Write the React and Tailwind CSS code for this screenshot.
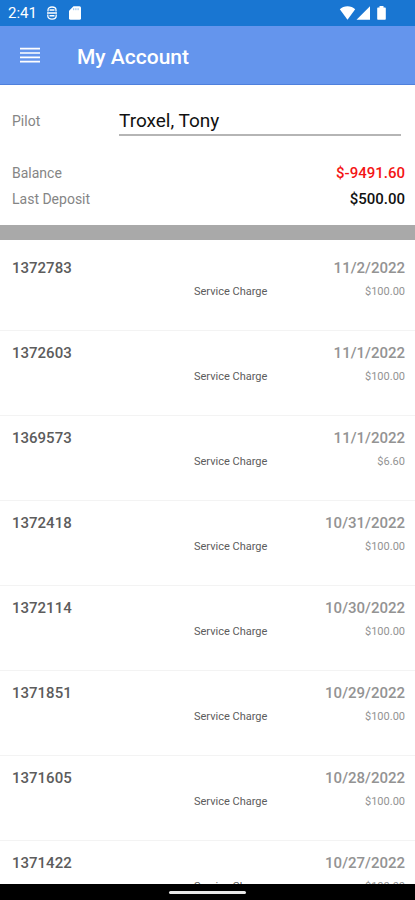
const TRANSACTIONS = [
  { id: "1372783", date: "11/2/2022", type: "Service Charge", amount: "$100.00" },
  { id: "1372603", date: "11/1/2022", type: "Service Charge", amount: "$100.00" },
  { id: "1369573", date: "11/1/2022", type: "Service Charge", amount: "$6.60" },
  { id: "1372418", date: "10/31/2022", type: "Service Charge", amount: "$100.00" },
  { id: "1372114", date: "10/30/2022", type: "Service Charge", amount: "$100.00" },
  { id: "1371851", date: "10/29/2022", type: "Service Charge", amount: "$100.00" },
  { id: "1371605", date: "10/28/2022", type: "Service Charge", amount: "$100.00" },
  { id: "1371422", date: "10/27/2022", type: "Service Charge", amount: "$100.00" },
];

function StatusBar() {
  return (
    <div className="flex h-[26px] shrink-0 items-center justify-between bg-[#1976d2] pl-2 pr-7 text-white">
      <div className="flex items-center">
        <span className="w-9 text-[15px] leading-5">2:41</span>
        <svg className="ml-0.5 h-4 w-3" viewBox="0 0 12 16" fill="none" stroke="currentColor">
          <path d="M2 6.500V5C2 3 3.700 2 6 2s4 1 4 3v1.500M1.800 9.500v1.300C1.800 13 3.500 14.200 6 14.200s4.200-1.200 4.200-3.400V9.500" strokeWidth="1.3" />
          <path d="M1 8h10M3.500 5h5M3.500 10.800h5" strokeWidth="1.4" />
        </svg>
        <svg className="ml-2.5 h-4 w-[14px]" viewBox="0 0 14 16" fill="currentColor">
          <path d="M5.500 1.200h6A1.500 1.500 0 0 1 13 2.700v10.600a1.500 1.500 0 0 1-1.500 1.500h-9A1.500 1.500 0 0 1 1 13.300V5.700z" />
          <path d="M5.700 3.200v2M7.900 3.200v2M10.100 3.200v2" stroke="#8dbcec" strokeWidth="1" />
        </svg>
      </div>
      <svg className="h-4 w-12" viewBox="0 0 48 16" fill="currentColor">
        <path d="M.8 4.300C2.800 2.300 5.500 1.200 8.500 1.200s5.700 1.100 7.700 3.100L8.500 14.800z" />
        <path d="M31 1.200v13.600H17.500z" />
        <path d="M40.500 1h4v1.600h1.300c.6 0 1 .4 1 1v10.200c0 .6-.4 1-1 1h-6.600c-.6 0-1-.4-1-1V3.600c0-.6.4-1 1-1h1.300z" />
      </svg>
    </div>
  );
}

function Transaction({ item }) {
  return (
    <li className="h-[85px] shrink-0 border-b border-[#f3f3f3] pt-3 pr-[10px] pl-3">
      <div className="flex justify-between text-[15px] leading-5 font-medium">
        <span className="text-[#5c5c5c]">{item.id}</span>
        <span className="text-[#939393]">{item.date}</span>
      </div>
      <div className="mt-1.5 grid grid-cols-[182px_1fr_auto] text-[11px] leading-4">
        <span className="col-start-2 text-[#5c5c5c]">{item.type}</span>
        <span className="text-[#939393]">{item.amount}</span>
      </div>
    </li>
  );
}

export default function App() {
  return (
    <div className="flex h-screen flex-col overflow-hidden bg-white font-[Roboto,sans-serif]">
      <StatusBar />

      {/* App bar */}
      <header className="flex h-[59px] shrink-0 items-center border-b border-[#4f80dc] bg-[#6495ed] pl-5 text-white">
        <button type="button" aria-label="Open menu" className="w-[57px]">
          <svg className="h-4 w-5" viewBox="0 0 20 16" stroke="currentColor" strokeWidth="1.7">
            <path d="M0 1.700h20M0 6h20M0 10.300h20M0 14.600h20" />
          </svg>
        </button>
        <h1 className="pt-1 text-[21px] leading-7 font-medium">My Account</h1>
      </header>

      {/* Account summary */}
      <section className="h-[140px] shrink-0 pt-[21px] pr-[10px] pl-3 leading-5">
        <div className="flex items-center pr-1">
          <label htmlFor="pilot" className="w-[107px] text-sm text-[#858585]">Pilot</label>
          <input
            id="pilot"
            type="text"
            defaultValue="Troxel, Tony"
            className="h-[30px] min-w-0 flex-1 border-b-2 border-[#b5b5b5] text-[19px] text-[#111] outline-none"
          />
        </div>
        <dl className="mt-[27px] space-y-1.5">
          <div className="flex justify-between leading-5">
            <dt className="text-sm text-[#858585]">Balance</dt>
            <dd className="text-[15px] leading-5 font-medium text-[#f41414]">$-9491.60</dd>
          </div>
          <div className="flex justify-between leading-5">
            <dt className="text-sm text-[#858585]">Last Deposit</dt>
            <dd className="text-[15px] leading-5 font-medium text-[#111]">$500.00</dd>
          </div>
        </dl>
      </section>
      <div className="h-[15px] shrink-0 bg-[#a9a9a9]" />

      {/* Transactions */}
      <ul className="min-h-0 flex-1 overflow-hidden pt-1.5">
        {TRANSACTIONS.map((t) => (
          <Transaction key={t.id} item={t} />
        ))}
      </ul>

      {/* Gesture bar */}
      <div className="flex h-4 shrink-0 items-center justify-center bg-black">
        <div className="h-[3px] w-[77px] rounded-full bg-[#e8e8e8]" />
      </div>
    </div>
  );
}
